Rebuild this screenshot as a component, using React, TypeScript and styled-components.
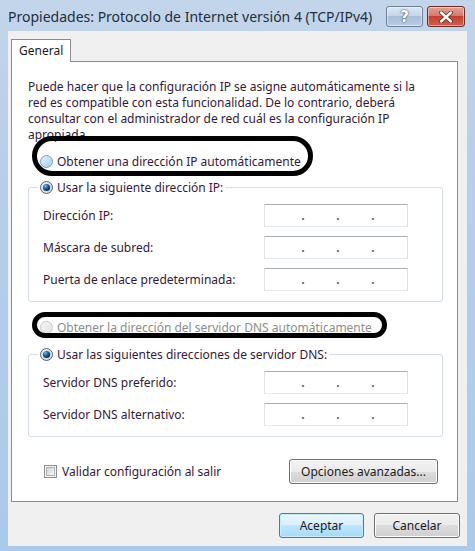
import React from "react";
import styled, { createGlobalStyle } from "styled-components";

const GlobalStyle = createGlobalStyle`
  html, body { margin: 0; padding: 0; background: #fff; }
  body { font-family: "Noto Sans", "Open Sans", sans-serif; }
  * { box-sizing: border-box; }
`;

const TEXT = "#34193a";

const Window = styled.div`
  position: relative;
  width: 475px;
  height: 551px;
  padding: 0 8px 5px 8px;
  display: flex;
  flex-direction: column;
  background: linear-gradient(180deg, #c3d5ea 0%, #b7cfe9 30%, #aacaeb 100%);
`;

const TitleBar = styled.div`
  height: 31px;
  display: flex;
  align-items: flex-start;
`;

const TitleText = styled.div`
  flex: 1;
  font-size: 14px;
  line-height: 20px;
  padding-top: 7px;
  color: #22303c;
  white-space: nowrap;
`;

const CaptionButtons = styled.div`
  display: flex;
  gap: 4px;
  padding-top: 6px;
  margin-right: 2px;
`;

const CaptionButton = styled.div<{ $close?: boolean }>`
  width: ${(p) => (p.$close ? 38 : 37)}px;
  height: 21px;
  border-radius: 3px;
  display: flex;
  align-items: center;
  justify-content: center;
  border: 1px solid ${(p) => (p.$close ? "#6f2a25" : "#6d7f95")};
  box-shadow: inset 0 0 0 1px rgba(255, 255, 255, 0.45);
  background: ${(p) =>
    p.$close
      ? "linear-gradient(180deg, #e4a196 0%, #d47a6c 45%, #c2412f 50%, #cf5f4c 100%)"
      : "linear-gradient(180deg, #dce7f3 0%, #c6d6e8 45%, #a9bfd8 50%, #b8cde3 100%)"};
  color: #fff;
  font-family: "DejaVu Sans", sans-serif;
  font-weight: bold;
  font-size: 15px;
  text-shadow: 0 0 2px #3d5068, 0 0 1px #3d5068;
`;

const Client = styled.div`
  flex: 1;
  background: #f0f0f0;
  padding: 8px 7px 0 3px;
  display: flex;
  flex-direction: column;
`;

const TabStrip = styled.div`
  height: 22px;
  display: flex;
`;

const Tab = styled.div`
  position: relative;
  z-index: 1;
  width: 60px;
  height: 23px;
  border: 1px solid #898c95;
  border-bottom: none;
  background: #fff;
  padding-left: 7px;
  font-size: 12px;
  line-height: 21px;
  color: #1a1a1a;
`;

const Panel = styled.div`
  margin-right: 2px;
  border: 1px solid #898c95;
  background: #fff;
  padding: 17px 14px 17px 16px;
  display: flex;
  flex-direction: column;
`;

const Paragraph = styled.p`
  margin: 0;
  font-size: 12px;
  line-height: 16px;
  color: ${TEXT};
  white-space: nowrap;
`;

const RadioRow = styled.div<{ $disabled?: boolean; $mt: number }>`
  display: flex;
  align-items: center;
  gap: 4px;
  height: 16px;
  margin-top: ${(p) => p.$mt}px;
  padding-left: 12px;
  font-size: 12px;
  color: ${(p) => (p.$disabled ? "#8d8d8d" : TEXT)};
`;

const Group = styled.fieldset<{ $mt: number }>`
  margin: ${(p) => p.$mt}px 0 0 0;
  min-width: 0;
  border: 1px solid #d5dfe5;
  border-radius: 3px;
  padding: 9px 0 10px 0;
`;

const Legend = styled.legend`
  margin-left: 9px;
  padding: 0 2px;
  height: 16px;
  display: flex;
  align-items: center;
  gap: 4px;
  font-size: 12px;
  color: ${TEXT};
`;

const FieldList = styled.div`
  display: flex;
  flex-direction: column;
  gap: 9px;
`;

const FieldRow = styled.div`
  display: flex;
  align-items: center;
  height: 23px;
  padding-left: 14px;
`;

const FieldLabel = styled.div`
  width: 221px;
  font-size: 12px;
  color: ${TEXT};
`;

const IpBox = styled.div`
  width: 144px;
  height: 23px;
  border: 1px solid;
  border-color: #abadb3 #dbdfe6 #e3e9ef #e2e3ea;
  display: flex;
  align-items: center;
  padding-left: 5px;
  font-size: 12px;
  color: #55636a;
`;

const Octet = styled.span`
  width: 31px;
`;

const Dot = styled.span`
  width: 4px;
  text-align: center;
  font-weight: bold;
`;

const BottomRow = styled.div`
  margin-top: 22px;
  height: 25px;
  display: flex;
  align-items: center;
  justify-content: space-between;
  padding: 0 5px 0 16px;
`;

const CheckLabel = styled.label`
  display: flex;
  align-items: center;
  gap: 5px;
  font-size: 12px;
  color: ${TEXT};
`;

const CheckBox = styled.span`
  width: 13px;
  height: 13px;
  border: 1px solid #8e8f8f;
  padding: 1px;
  background: #f4f4f4;
  display: flex;
  & > span {
    flex: 1;
    border: 1px solid #aeb3b9;
    background: linear-gradient(135deg, #cbcfd5 0%, #e6e7e9 60%, #f6f6f6 100%);
  }
`;

const Button = styled.div<{ $w: number; $default?: boolean }>`
  width: ${(p) => p.$w}px;
  height: 25px;
  border-radius: 3px;
  border: 1px solid ${(p) => (p.$default ? "#3c7fb1" : "#707070")};
  box-shadow: inset 0 0 0 1px ${(p) => (p.$default ? "#c9ecfb" : "#fcfcfc")};
  background: ${(p) =>
    p.$default
      ? "linear-gradient(180deg, #eaf6fd 0%, #d9f0fc 50%, #bee6fd 50%, #a7d9f5 100%)"
      : "linear-gradient(180deg, #f2f2f2 0%, #ebebeb 50%, #dddddd 50%, #cfcfcf 100%)"};
  display: flex;
  align-items: center;
  justify-content: center;
  font-size: 12px;
  color: #1c1c1c;
`;

const DialogButtons = styled.div`
  margin-top: 11px;
  display: flex;
  justify-content: flex-end;
  gap: 10px;
`;

const Annotation = styled.div<{ $x: number; $y: number; $w: number; $h: number; $r: number }>`
  position: absolute;
  left: ${(p) => p.$x}px;
  top: ${(p) => p.$y}px;
  width: ${(p) => p.$w}px;
  height: ${(p) => p.$h}px;
  border: 5px solid #000;
  border-radius: ${(p) => p.$r}px;
  pointer-events: none;
`;

type RadioKind = "focus" | "checked" | "disabled";

const Radio = ({ kind }: { kind: RadioKind }) => (
  <svg width="13" height="13" viewBox="0 0 13 13" style={{ flex: "none" }}>
    <defs>
      <linearGradient id={`rf-${kind}`} x1="0" y1="0" x2="1" y2="1">
        {kind === "focus" ? (
          <>
            <stop offset="0" stopColor="#e6f4fc" />
            <stop offset="1" stopColor="#9fcdee" />
          </>
        ) : kind === "disabled" ? (
          <>
            <stop offset="0" stopColor="#f7f7f7" />
            <stop offset="1" stopColor="#e2e2e2" />
          </>
        ) : (
          <>
            <stop offset="0" stopColor="#f3f5f7" />
            <stop offset="1" stopColor="#c9d2da" />
          </>
        )}
      </linearGradient>
      <radialGradient id="rdot" cx="0.35" cy="0.3" r="0.8">
        <stop offset="0" stopColor="#7fc2ee" />
        <stop offset="0.45" stopColor="#1c5f93" />
        <stop offset="1" stopColor="#071f36" />
      </radialGradient>
    </defs>
    <circle
      cx="6.5"
      cy="6.5"
      r="6"
      fill={`url(#rf-${kind})`}
      stroke={kind === "disabled" ? "#c9c9c9" : kind === "focus" ? "#7f9db9" : "#4f6479"}
    />
    {kind === "checked" && <circle cx="6.5" cy="6.5" r="3.6" fill="url(#rdot)" />}
  </svg>
);

const IpField = () => (
  <IpBox>
    <Octet />
    <Dot>.</Dot>
    <Octet />
    <Dot>.</Dot>
    <Octet />
    <Dot>.</Dot>
    <Octet />
  </IpBox>
);

const CloseIcon = () => (
  <svg width="14" height="12" viewBox="0 0 14 12">
    <path d="M2 1.5 L12 10.5 M12 1.5 L2 10.5" stroke="#6a2720" strokeWidth="4" strokeLinecap="round" />
    <path d="M2 1.5 L12 10.5 M12 1.5 L2 10.5" stroke="#fff" strokeWidth="2.4" strokeLinecap="round" />
  </svg>
);

export default function App() {
  return (
    <>
      <GlobalStyle />
      <Window>
        <TitleBar>
          <TitleText>Propiedades: Protocolo de Internet versión 4 (TCP/IPv4)</TitleText>
          <CaptionButtons>
            <CaptionButton>?</CaptionButton>
            <CaptionButton $close>
              <CloseIcon />
            </CaptionButton>
          </CaptionButtons>
        </TitleBar>
        <Client>
          <TabStrip>
            <Tab>General</Tab>
          </TabStrip>
          <Panel>
            <Paragraph>
              Puede hacer que la configuración IP se asigne automáticamente si la
              <br />
              red es compatible con esta funcionalidad. De lo contrario, deberá
              <br />
              consultar con el administrador de red cuál es la configuración IP
              <br />
              apropiada.
            </Paragraph>
            <RadioRow $mt={10}>
              <Radio kind="focus" />
              Obtener una dirección IP automáticamente
            </RadioRow>
            <Group $mt={10}>
              <Legend>
                <Radio kind="checked" />
                Usar la siguiente dirección IP:
              </Legend>
              <FieldList>
                <FieldRow>
                  <FieldLabel>Dirección IP:</FieldLabel>
                  <IpField />
                </FieldRow>
                <FieldRow>
                  <FieldLabel>Máscara de subred:</FieldLabel>
                  <IpField />
                </FieldRow>
                <FieldRow>
                  <FieldLabel>Puerta de enlace predeterminada:</FieldLabel>
                  <IpField />
                </FieldRow>
              </FieldList>
            </Group>
            <RadioRow $mt={17} $disabled>
              <Radio kind="disabled" />
              Obtener la dirección del servidor DNS automáticamente
            </RadioRow>
            <Group $mt={11}>
              <Legend>
                <Radio kind="checked" />
                Usar las siguientes direcciones de servidor DNS:
              </Legend>
              <FieldList>
                <FieldRow>
                  <FieldLabel>Servidor DNS preferido:</FieldLabel>
                  <IpField />
                </FieldRow>
                <FieldRow>
                  <FieldLabel>Servidor DNS alternativo:</FieldLabel>
                  <IpField />
                </FieldRow>
              </FieldList>
            </Group>
            <BottomRow>
              <CheckLabel>
                <CheckBox>
                  <span />
                </CheckBox>
                Validar configuración al salir
              </CheckLabel>
              <Button $w={149}>Opciones avanzadas...</Button>
            </BottomRow>
          </Panel>
          <DialogButtons>
            <Button $w={85} $default>
              Aceptar
            </Button>
            <Button $w={86}>Cancelar</Button>
          </DialogButtons>
        </Client>
        <Annotation $x={32} $y={136} $w={281} $h={40} $r={20} />
        <Annotation $x={32} $y={312} $w={355} $h={26} $r={13} />
      </Window>
    </>
  );
}
